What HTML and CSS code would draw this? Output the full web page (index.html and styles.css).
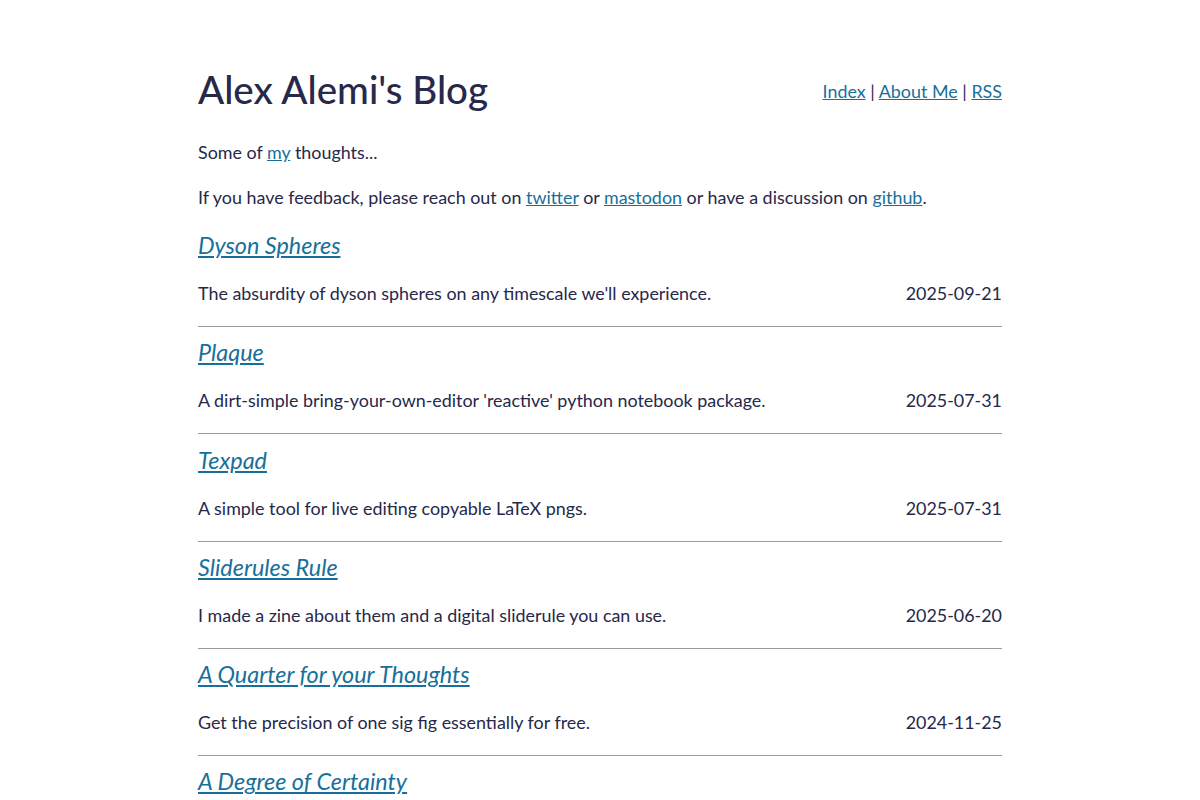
FILE: index.html
```html
<!DOCTYPE html>
<html>
<head>
<meta charset="utf-8">
<link rel="stylesheet" href="styles.css">
</head>
<body>
<div class="page">
  <header class="site-header">
    <h1 class="site-title">Alex Alemi's Blog</h1>
    <nav class="nav"><a href="#">Index</a> | <a href="#">About Me</a> | <a href="#">RSS</a></nav>
  </header>
  <p class="intro">Some of <a href="#">my</a> thoughts...</p>
  <p class="intro">If you have feedback, please reach out on <a href="#">twitter</a> or <a href="#">mastodon</a> or have a discussion on <a href="#">github</a>.</p>
  <div class="posts">
    <article class="post">
      <h2 class="post-title"><a href="#">Dyson Spheres</a></h2>
      <div class="post-row"><span>The absurdity of dyson spheres on any timescale we'll experience.</span><span>2025-09-21</span></div>
    </article>
    <article class="post">
      <h2 class="post-title"><a href="#">Plaque</a></h2>
      <div class="post-row"><span>A dirt-simple bring-your-own-editor 'reactive' python notebook package.</span><span>2025-07-31</span></div>
    </article>
    <article class="post">
      <h2 class="post-title"><a href="#">Texpad</a></h2>
      <div class="post-row"><span>A simple tool for live editing copyable LaTeX pngs.</span><span>2025-07-31</span></div>
    </article>
    <article class="post">
      <h2 class="post-title"><a href="#">Sliderules Rule</a></h2>
      <div class="post-row"><span>I made a zine about them and a digital sliderule you can use.</span><span>2025-06-20</span></div>
    </article>
    <article class="post">
      <h2 class="post-title"><a href="#">A Quarter for your Thoughts</a></h2>
      <div class="post-row"><span>Get the precision of one sig fig essentially for free.</span><span>2024-11-25</span></div>
    </article>
    <article class="post">
      <h2 class="post-title"><a href="#">A Degree of Certainty</a></h2>
    </article>
  </div>
</div>
</body>
</html>
```

FILE: styles.css
```css
html, body {
  margin: 0;
  padding: 0;
  background: #ffffff;
}
body {
  font-family: Lato, "Liberation Sans", sans-serif;
  font-size: 17.9px;
  line-height: 27px;
  color: #27284a;
}
a {
  color: #18709a;
  text-decoration: underline;
}
.page {
  width: 804px;
  margin: 0 auto;
  padding-top: 65px;
}
.site-header {
  display: flex;
  justify-content: space-between;
  align-items: center;
  height: 48px;
}
.site-title {
  margin: 0;
  font-size: 38.5px;
  line-height: 48px;
  font-weight: 500;
  color: #27284a;
}
.nav {
  font-size: 17.9px;
  line-height: 27px;
  padding-top: 4px;
}
.intro {
  margin: 0;
  line-height: 27px;
}
.site-header + .intro {
  margin-top: 26px;
}
.intro + .intro {
  margin-top: 18px;
}
.posts {
  margin-top: 20px;
}
.post {
  padding-bottom: 18px;
  border-bottom: 1px solid #9a9a9a;
  margin-bottom: 11.3px;
}
.post:last-child {
  border-bottom: none;
  padding-bottom: 0;
}
.post-title {
  margin: 0;
  font-size: 23.4px;
  line-height: 28px;
  font-weight: 400;
  font-style: italic;
}
.post-row {
  margin-top: 19px;
  display: flex;
  justify-content: space-between;
  line-height: 30px;
}
```
